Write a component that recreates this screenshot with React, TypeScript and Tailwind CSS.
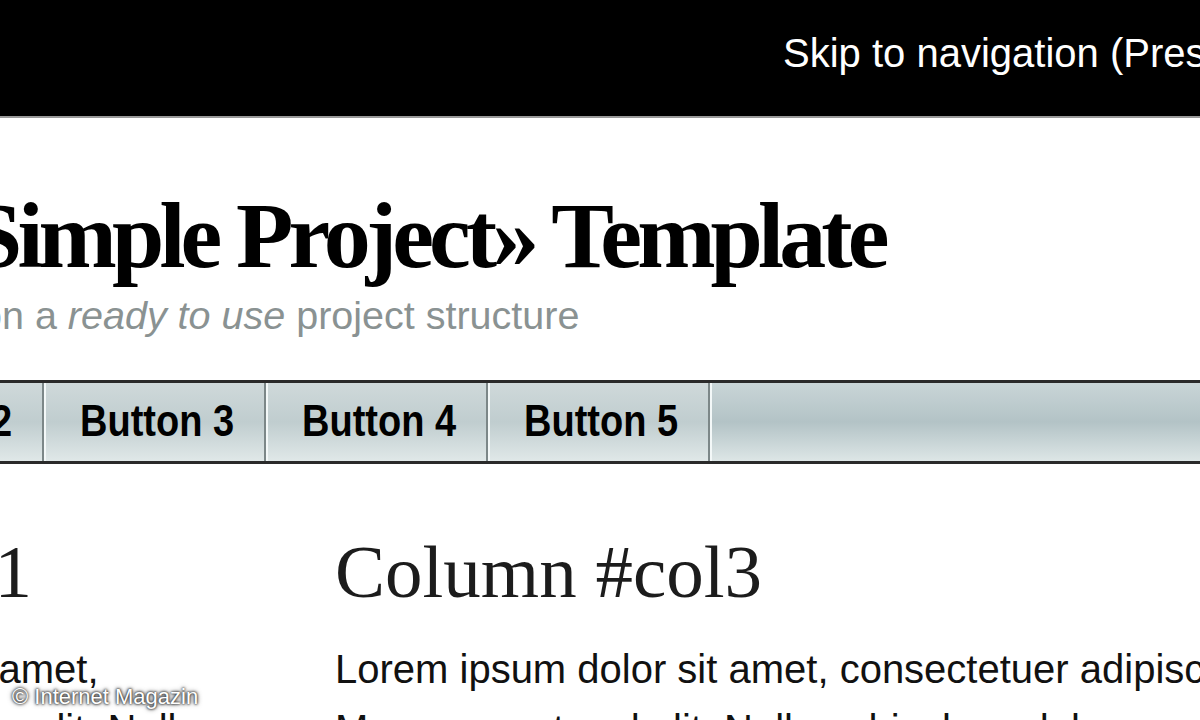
const buttons = ['Button 1', 'Button 2', 'Button 3', 'Button 4', 'Button 5'];

const sans = "font-['Liberation_Sans',Arial,sans-serif]";
const serif = "font-['Liberation_Serif','Times_New_Roman',serif]";

export default function App() {
  return (
    <div className="relative w-[1200px] h-[720px] overflow-hidden bg-white">
      {/* top bar */}
      <header className="h-[118px] bg-black border-b-2 border-[#9a9a9a]">
        <div className={`${sans} pl-[783px] pt-[33px] text-[40px] leading-none text-white whitespace-nowrap`}>
          Skip to navigation (Press Enter)
        </div>
      </header>

      {/* title */}
      <div className="pt-[70px] whitespace-nowrap">
        <h1 className={`${serif} ml-[-30px] text-[94px] leading-none font-bold tracking-[-4.9px] text-black`}>
          Simple Project» Template
        </h1>
        <p className={`${sans} ml-[-143px] mt-[14px] text-[39.5px] leading-none text-[#8a9292]`}>
          Based on a <em>ready to use</em> project structure
        </p>
      </div>

      {/* navigation */}
      <nav className="mt-[44px] h-[84px] border-y-[3px] border-[#2a2a2a] bg-linear-to-b from-[#c9d5d7] via-[#b3c3c6] to-[#dde6e6] flex">
        <ul className="ml-[-400px] flex shrink-0">
          {buttons.map((b) => (
            <li
              key={b}
              className="w-[222px] shrink-0 flex items-center pl-[34px] border-l-2 border-r-2 border-l-[#f3f8f8] border-r-[#7c8788] bg-linear-to-b from-[#cfd9da] via-[#c0cdcf] to-[#e0e8e8]"
            >
              <span className={`${sans} inline-block scale-y-[1.18] text-[38px] font-bold text-black whitespace-nowrap`}>
                {b}
              </span>
            </li>
          ))}
        </ul>
        <div className="flex-1 border-l-2 border-[#f3f8f8]" />
      </nav>

      {/* columns */}
      <main className="ml-[-395px] pt-[70px] flex gap-[90px]">
        <section className="w-[640px] shrink-0">
          <h2 className={`${serif} text-[75px] leading-none text-[#1c1c1c] whitespace-nowrap`}>Column #col1</h2>
          <p className={`${sans} mt-[30px] text-[40px] leading-[60px] text-[#111]`}>
            Lorem ipsum dolor sit amet, consectetuer adipiscing elit. Nulla vehicula aliquet eros.
          </p>
        </section>
        <section className="w-[1000px] shrink-0">
          <h2 className={`${serif} text-[75px] leading-none text-[#1c1c1c] whitespace-nowrap`}>Column #col3</h2>
          <p className={`${sans} mt-[30px] text-[40px] leading-[60px] text-[#111]`}>
            Lorem ipsum dolor sit amet, consectetuer adipiscing elit. Maecenas at sed elit. Nulla vehicula sodales.
          </p>
        </section>
      </main>

      {/* watermark */}
      <div
        className={`${sans} absolute left-[12px] top-[686px] text-[22px] leading-none text-white [text-shadow:0_0_2px_#333,0_0_3px_#333,0_0_5px_rgba(0,0,0,0.7)]`}
      >
        © Internet Magazin
      </div>
    </div>
  );
}
